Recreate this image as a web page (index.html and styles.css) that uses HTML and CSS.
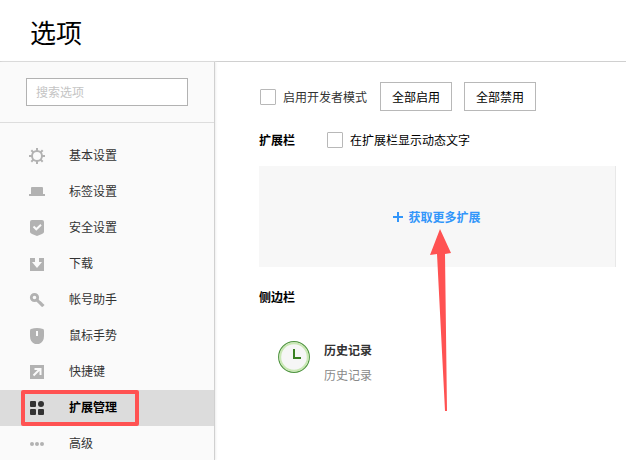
FILE: index.html
```html
<!DOCTYPE html>
<html lang="zh-CN">
<head>
<meta charset="utf-8">
<title>选项</title>
<link rel="stylesheet" href="styles.css">
</head>
<body>
<header class="header"><h1>选项</h1></header>
<div class="layout">
  <aside class="sidebar">
    <div class="search"><input type="search" aria-label="搜索选项" placeholder="搜索选项"></div>
    <nav class="nav">
      <a href="#basic"><svg viewBox="0 0 16 16"><circle cx="8" cy="8" r="5" fill="none" stroke="currentColor" stroke-width="2"/><path d="M8 0v3M8 13v3M0 8h3M13 8h3M2.3 2.3l2.2 2.2M11.5 11.5l2.2 2.2M2.3 13.7l2.2-2.2M11.5 4.5l2.2-2.2" stroke="currentColor" stroke-width="2"/></svg><span>基本设置</span></a>
      <a href="#tabs"><svg viewBox="0 0 16 16"><path d="M3 3h10q1 0 1 1v6h2v2H0v-2h2V4q0-1 1-1z" fill="currentColor"/></svg><span>标签设置</span></a>
      <a href="#security"><svg viewBox="0 0 16 16"><path d="M3 0h10q2 0 2 2v10q0 1-2 2l-5 2-5-2q-2-1-2-2V2q0-2 2-2z" fill="currentColor"/><path d="M4.5 6.5L7.3 9.3 12 4.8" fill="none" stroke="#fafafa" stroke-width="2"/></svg><span>安全设置</span></a>
      <a href="#download"><svg viewBox="0 0 16 16"><path d="M1 2h14v13H1z" fill="currentColor"/><path d="M6 1h4v5h3l-5 6-5-6h3z" fill="#fafafa"/></svg><span>下载</span></a>
      <a href="#account"><svg viewBox="0 0 16 16"><circle cx="5.5" cy="5.5" r="3.2" fill="none" stroke="currentColor" stroke-width="2.8"/><path d="M8 8l6 6M10.5 12l2-2M12.5 14l2-2" stroke="currentColor" stroke-width="3"/></svg><span>帐号助手</span></a>
      <a href="#gestures"><svg viewBox="0 0 16 16"><path d="M2 1q6-2 12 0 1 0 1 2v5q0 6-5 8H6Q1 14 1 8V3q0-2 1-2z" fill="currentColor"/><path d="M7 3h2v5H7z" fill="#fafafa"/></svg><span>鼠标手势</span></a>
      <a href="#keys"><svg viewBox="0 0 16 16"><path d="M1 1h14v14H1z" fill="currentColor"/><path d="M4.5 11.5l6-6M5.5 5h6v6" fill="none" stroke="#fafafa" stroke-width="2"/></svg><span>快捷键</span></a>
      <a href="#extensions" class="active" aria-current="page"><svg viewBox="0 0 16 16"><rect x="1" y="1" width="6" height="6" rx="1" fill="currentColor"/><circle cx="12" cy="4" r="3" fill="currentColor"/><rect x="1" y="9" width="6" height="6" rx="1" fill="currentColor"/><rect x="9" y="9" width="6" height="6" rx="1" fill="currentColor"/></svg><span>扩展管理</span></a>
      <a href="#advanced"><svg viewBox="0 0 16 16"><g fill="currentColor"><circle cx="3" cy="8" r="2"/><circle cx="8" cy="8" r="2"/><circle cx="13" cy="8" r="2"/></g></svg><span>高级</span></a>
    </nav>
  </aside>
  <main class="main">
    <div class="toolbar">
      <label class="check muted"><input type="checkbox"><span>启用开发者模式</span></label>
      <button type="button">全部启用</button>
      <button type="button">全部禁用</button>
    </div>
    <section>
      <div class="section-head">
        <h2>扩展栏</h2>
        <label class="check"><input type="checkbox"><span>在扩展栏显示动态文字</span></label>
      </div>
      <div class="panel">
        <a href="#more" class="more"><svg viewBox="0 0 10 10"><path d="M5 0v10M0 5h10" stroke="currentColor" stroke-width="2"/></svg><span>获取更多扩展</span></a>
        <svg class="arrow" viewBox="0 0 24 184" aria-hidden="true"><path d="M11 1L1 27l7-1 8 157h2L16 26l6-1z" fill="#ff5252"/></svg>
      </div>
    </section>
    <section>
      <h2>侧边栏</h2>
      <div class="extension">
        <svg viewBox="0 0 32 32"><circle cx="16" cy="16" r="15.3" fill="#f6f6f6" stroke="#4f9440" stroke-width="1.3"/><circle cx="16" cy="16" r="13.8" fill="none" stroke="#c9e8b4" stroke-width="2"/><path d="M16 8v9h7" fill="none" stroke="#398022" stroke-width="2"/></svg>
        <div>
          <h3>历史记录</h3>
          <p>历史记录</p>
        </div>
      </div>
    </section>
  </main>
</div>
</body>
</html>
```
FILE: styles.css
```css
* { box-sizing: border-box; }

body {
  margin: 0;
  height: 100vh;
  overflow: hidden;
  display: flex;
  flex-direction: column;
  background: #fff;
  color: #000;
  font: 12px/20px "Noto Sans CJK SC", sans-serif;
}

h1, h2, h3, p { margin: 0; font-size: 12px; }

.header {
  flex: none;
  padding: 14px 30px 11px;
  border-bottom: 1px solid #d0d0d0;
}
.header h1 { font-size: 26px; line-height: 36px; font-weight: 400; }

.layout { flex: 1; min-height: 0; display: flex; }

.sidebar {
  flex: none;
  width: 215px;
  overflow: hidden;
  background: #fafafa;
  border-right: 1px solid #d0d0d0;
  box-shadow: 1px 0 2px #eee;
}

.search { padding: 16px 26px; border-bottom: 1px solid #ddd; }
.search input {
  display: block;
  width: 100%;
  height: 28px;
  padding: 0 9px 2px;
  border: 1px solid #b2b2b2;
  border-radius: 0;
  background: #fff;
  font: inherit;
  appearance: none;
}
.search input::placeholder { color: #c4c4c4; }

.nav { padding-top: 15px; }
.nav a {
  position: relative;
  display: flex;
  align-items: center;
  gap: 24px;
  height: 36px;
  padding-left: 29px;
  color: #333;
  text-decoration: none;
}
.nav span { padding-bottom: 2px; }
.nav svg { width: 16px; height: 16px; color: #b2b2b2; }
.nav .active { background: #dcdcdc; color: #000; font-weight: 700; }
.nav .active svg { color: #333; }
.nav .active::after {
  content: "";
  position: absolute;
  inset: 0 75px 0 21px;
  border: 4px solid #ff5252;
  border-radius: 2px;
}

.main { flex: 1; min-width: 0; padding: 20px 10px 0 44px; }

.toolbar { display: flex; align-items: center; gap: 12px; }

.check { display: flex; align-items: center; gap: 7px; }
.check input {
  width: 16px;
  height: 16px;
  margin: 0;
  border: 1px solid #b8b8b8;
  border-radius: 1px;
  background: #fff;
  appearance: none;
}
.check input:checked { background: #3296fa; }
.muted { padding: 0 1px; color: #333; }

button {
  height: 29px;
  padding: 0 11px;
  border: 1px solid #b8b8b8;
  background: #fff;
  color: #000;
  font: inherit;
}

.section-head {
  display: flex;
  align-items: center;
  gap: 32px;
  padding: 19px 0 16px;
}

.panel {
  position: relative;
  display: flex;
  align-items: center;
  justify-content: center;
  height: 101px;
  margin-bottom: 20px;
  background: #f7f7f7;
  border-right: 1px solid #e8e8e8;
}
.more {
  display: flex;
  align-items: center;
  gap: 5px;
  color: #3296fa;
  font-weight: 700;
  text-decoration: none;
}
.more svg { width: 10px; height: 10px; }
.arrow {
  position: absolute;
  top: 62px;
  left: calc(50% - 8px);
  width: 24px;
  height: 184px;
  pointer-events: none;
}

.extension { display: flex; align-items: flex-start; gap: 14px; padding: 30px 19px; }
.extension svg { width: 32px; height: 32px; margin-top: 4px; }
.extension h3 { line-height: 25px; color: #333; }
.extension p { line-height: 25px; color: #888; }
```
